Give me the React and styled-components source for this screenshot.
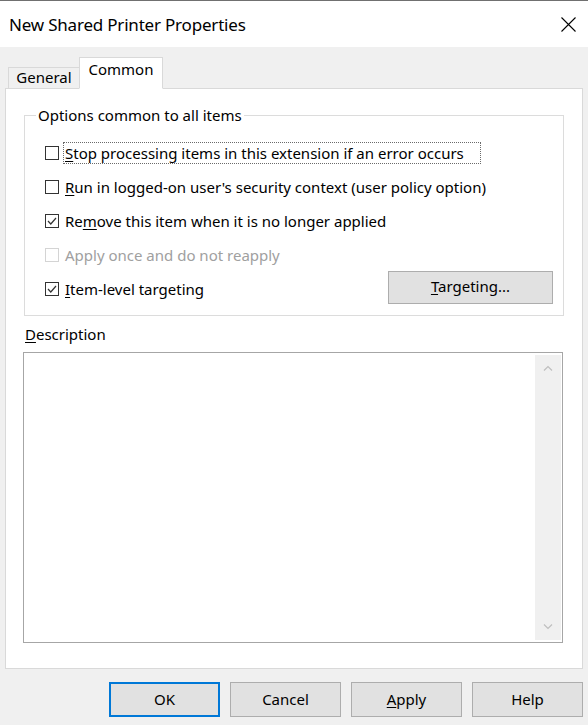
import styled, { createGlobalStyle } from 'styled-components';

const GlobalStyle = createGlobalStyle`
  html, body {
    margin: 0;
    padding: 0;
    background: #f0f0f0;
  }
  body {
    font-family: "Noto Sans", "Open Sans", sans-serif;
    color: #000;
  }
`;

const Window = styled.div`
  width: 588px;
  height: 725px;
  box-sizing: border-box;
  border-top: 1px solid #707070;
  background: #f0f0f0;
  display: flex;
  flex-direction: column;
  overflow: hidden;
`;

const TitleBar = styled.div`
  height: 46px;
  background: #fff;
  display: flex;
  align-items: center;
  justify-content: space-between;
  padding: 0 12px 0 9px;
`;

const Title = styled.span`
  font-size: 17px;
  letter-spacing: -0.2px;
`;

const CloseButton = styled.svg`
  width: 15px;
  height: 15px;
`;

const Body = styled.div`
  padding: 10px 5px 0 5px;
  display: flex;
  flex-direction: column;
`;

const TabStrip = styled.div`
  display: flex;
  align-items: flex-end;
  padding-left: 3px;
  margin-bottom: -1px;
  position: relative;
  z-index: 1;
`;

const Tab = styled.div`
  box-sizing: border-box;
  font-size: 15px;
  border: 1px solid #d9d9d9;
  display: flex;
  align-items: center;
  justify-content: center;
  background: ${({ $active }) => ($active ? '#fff' : '#f0f0f0')};
  height: ${({ $active }) => ($active ? '32px' : '22px')};
  width: ${({ $active }) => ($active ? '84px' : '71px')};
  padding-bottom: ${({ $active }) => ($active ? '8px' : '2px')};
  border-bottom: ${({ $active }) => ($active ? '1px solid #fff' : '1px solid #d9d9d9')};
  border-right: ${({ $active }) => ($active ? '1px solid #d9d9d9' : 'none')};
`;

const Panel = styled.div`
  box-sizing: border-box;
  width: 578px;
  height: 581px;
  background: #fff;
  border: 1px solid #d9d9d9;
  padding: 16px 18px 0 18px;
  display: flex;
  flex-direction: column;
`;

const GroupBox = styled.fieldset`
  margin: 0;
  padding: 11px 10px 9px 20px;
  border: 1px solid #dcdcdc;
  min-width: 0;
`;

const Legend = styled.legend`
  font-size: 15px;
  line-height: 20px;
  padding: 0 2px;
  margin-left: -9px;
`;

const Row = styled.div`
  height: 34px;
  display: flex;
  align-items: center;
  justify-content: space-between;
`;

const Option = styled.label`
  display: flex;
  align-items: center;
  gap: 6px;
  font-size: 15px;
  color: ${({ $disabled }) => ($disabled ? '#a0a0a0' : '#000')};
`;

const Box = styled.span`
  box-sizing: border-box;
  width: 14px;
  height: 14px;
  border: 1px solid ${({ $disabled }) => ($disabled ? '#d4d4d4' : '#333')};
  background: #fff;
  display: flex;
  align-items: center;
  justify-content: center;
`;

const OptionText = styled.span`
  padding: 0 1px;
  line-height: 20px;
  border: 1px dotted ${({ $focused }) => ($focused ? '#6a6a6a' : 'transparent')};
  margin-left: -2px;
  width: ${({ $focused }) => ($focused ? '414px' : 'auto')};
`;

const U = styled.span`
  text-decoration: underline;
  text-underline-offset: 2px;
`;

const PushButton = styled.button`
  box-sizing: border-box;
  font-family: inherit;
  font-size: 15px;
  color: #000;
  background: #e1e1e1;
  border: ${({ $default }) => ($default ? '2px solid #0078d7' : '1px solid #adadad')};
  width: ${({ $wide }) => ($wide ? '165px' : '111px')};
  height: ${({ $wide }) => ($wide ? '33px' : '35px')};
  margin-top: ${({ $wide }) => ($wide ? '-4px' : '0')};
  padding: 0 0 2px 0;
`;

const SectionLabel = styled.div`
  font-size: 15px;
  margin: 8px 0 8px 1px;
  line-height: 20px;
`;

const TextBox = styled.div`
  box-sizing: border-box;
  height: 291px;
  width: 540px;
  margin-left: -1px;
  border: 1px solid #a6a6a6;
  background: #fff;
  display: flex;
  justify-content: flex-end;
  padding: 2px 1px 2px 0;
`;

const ScrollBar = styled.div`
  width: 26px;
  background: #f0f0f0;
  display: flex;
  flex-direction: column;
  justify-content: space-between;
  align-items: center;
  padding: 10px 0;
`;

const Chevron = styled.svg`
  width: 10px;
  height: 6px;
`;

const Footer = styled.div`
  display: flex;
  justify-content: flex-end;
  gap: 10px;
  padding: 13px 0 0 0;
`;

function Check({ checked, disabled }) {
  return (
    <Box $disabled={disabled}>
      {checked && (
        <svg width="10" height="8" viewBox="0 0 10 8">
          <path d="M1 4 L3.8 7 L9 1" fill="none" stroke="#333" strokeWidth="1.2" />
        </svg>
      )}
    </Box>
  );
}

export default function App() {
  return (
    <>
      <GlobalStyle />
      <Window>
        <TitleBar>
          <Title>New Shared Printer Properties</Title>
          <CloseButton viewBox="0 0 15 15">
            <path d="M0.5 0.5 L14.5 14.5 M14.5 0.5 L0.5 14.5" stroke="#000" strokeWidth="1.1" />
          </CloseButton>
        </TitleBar>
        <Body>
          <TabStrip>
            <Tab>General</Tab>
            <Tab $active>Common</Tab>
          </TabStrip>
          <Panel>
            <GroupBox>
              <Legend>Options common to all items</Legend>
              <Row>
                <Option>
                  <Check />
                  <OptionText $focused>
                    <U>S</U>top processing items in this extension if an error occurs
                  </OptionText>
                </Option>
              </Row>
              <Row>
                <Option>
                  <Check />
                  <OptionText>
                    <U>R</U>un in logged-on user's security context (user policy option)
                  </OptionText>
                </Option>
              </Row>
              <Row>
                <Option>
                  <Check checked />
                  <OptionText>
                    Re<U>m</U>ove this item when it is no longer applied
                  </OptionText>
                </Option>
              </Row>
              <Row>
                <Option $disabled>
                  <Check disabled />
                  <OptionText>Apply once and do not reapply</OptionText>
                </Option>
              </Row>
              <Row>
                <Option>
                  <Check checked />
                  <OptionText>
                    <U>I</U>tem-level targeting
                  </OptionText>
                </Option>
                <PushButton $wide>
                  <U>T</U>argeting...
                </PushButton>
              </Row>
            </GroupBox>
            <SectionLabel>
              <U>D</U>escription
            </SectionLabel>
            <TextBox>
              <ScrollBar>
                <Chevron viewBox="0 0 10 6">
                  <path d="M1 5.5 L5 1.5 L9 5.5" fill="none" stroke="#bfbfbf" strokeWidth="1.2" />
                </Chevron>
                <Chevron viewBox="0 0 10 6">
                  <path d="M1 0.5 L5 4.5 L9 0.5" fill="none" stroke="#bfbfbf" strokeWidth="1.2" />
                </Chevron>
              </ScrollBar>
            </TextBox>
          </Panel>
          <Footer>
            <PushButton $default>OK</PushButton>
            <PushButton>Cancel</PushButton>
            <PushButton>
              <U>A</U>pply
            </PushButton>
            <PushButton>Help</PushButton>
          </Footer>
        </Body>
      </Window>
    </>
  );
}
